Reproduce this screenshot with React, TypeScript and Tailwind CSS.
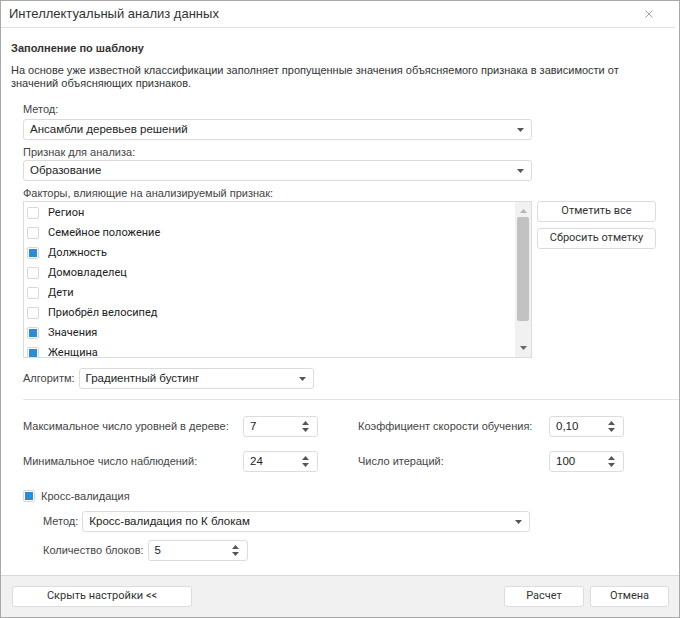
import React from 'react';

const FIELDS = [
  { name: 'Регион', on: false },
  { name: 'Семейное положение', on: false },
  { name: 'Должность', on: true },
  { name: 'Домовладелец', on: false },
  { name: 'Дети', on: false },
  { name: 'Приобрёл велосипед', on: false },
  { name: 'Значения', on: true },
  { name: 'Женщина', on: true },
];

const Caret: React.FC = () => (
  <svg width="7" height="4" viewBox="0 0 7 4" className="shrink-0">
    <path d="M0 0h7L3.5 4z" fill="#555" />
  </svg>
);

const Select: React.FC<{ value: string; className?: string }> = ({ value, className = '' }) => (
  <div className={`h-[21px] flex items-center justify-between pl-[6px] pr-[7px] border border-[#dcdcdc] rounded-[3px] bg-white text-[11.5px] text-[#222] ${className}`}>
    <span className="truncate">{value}</span>
    <Caret />
  </div>
);

const Spin: React.FC<{ value: string; className?: string }> = ({ value, className = '' }) => (
  <div className={`h-[21px] flex items-center justify-between pl-[6px] pr-[8px] border border-[#dcdcdc] rounded-[3px] bg-white text-[11.5px] text-[#222] ${className}`}>
    <span>{value}</span>
    <svg width="7" height="11" viewBox="0 0 7 11" className="shrink-0">
      <path d="M0 4h7L3.5 0z" fill="#555" />
      <path d="M0 7h7L3.5 11z" fill="#555" />
    </svg>
  </div>
);

const Check: React.FC<{ on: boolean }> = ({ on }) => (
  <span className="w-[12px] h-[12px] shrink-0 flex items-center justify-center border border-[#d8d8d8] rounded-[2px] bg-white">
    {on && <span className="w-[8px] h-[8px] bg-[#2b8dd6]" />}
  </span>
);

const Button: React.FC<{ label: string; className?: string }> = ({ label, className = '' }) => (
  <button className={`h-[21px] flex items-center justify-center border border-[#dcdcdc] rounded-[3px] bg-white text-[11px] text-[#333] font-['Roboto',sans-serif] ${className}`}>
    {label}
  </button>
);

export default function App() {
  return (
    <div className="w-[680px] h-[618px] flex flex-col border border-[#a9a9a9] bg-white text-[#333] font-['Liberation_Sans',Arial,sans-serif]">
      <div className="h-[27px] shrink-0 flex items-center justify-between pl-[8px] pr-[22px] border-b border-[#dedede] mr-[4px]">
        <span className="text-[13px] text-[#333]">Интеллектуальный анализ данных</span>
        <svg width="8" height="8" viewBox="0 0 8 8">
          <path d="M0.5 0.5l7 7M7.5 0.5l-7 7" stroke="#a0a0a0" strokeWidth="1" />
        </svg>
      </div>

      <div className="flex-1 pt-[13px] pl-[10px]">
        <div className="text-[11px] leading-[14px] font-bold text-[#333]">Заполнение по шаблону</div>
        <div className="mt-[9px] text-[11px] leading-[13px] text-[#333] pr-[40px]">
          На основе уже известной классификации заполняет пропущенные значения объясняемого признака в зависимости от значений объясняющих признаков.
        </div>

        <div className="pl-[12px] text-[11px] text-[#444]">
          <div className="mt-[12px] leading-[14px]">Метод:</div>
          <Select value="Ансамбли деревьев решений" className="mt-[3px] w-[509px]" />
          <div className="mt-[5px] leading-[14px]">Признак для анализа:</div>
          <Select value="Образование" className="mt-[1px] w-[509px]" />
          <div className="mt-[5px] leading-[14px]">Факторы, влияющие на анализируемый признак:</div>

          <div className="mt-[1px] flex gap-[5px]">
            <div className="w-[509px] h-[157px] flex border border-[#dcdcdc] bg-white overflow-hidden">
              <div className="flex-1 pl-[3px] pt-[1px] font-['Roboto',sans-serif] text-[11px] text-[#222]">
                {FIELDS.map(f => (
                  <div key={f.name} className="h-[20px] flex items-center gap-[9px]">
                    <Check on={f.on} />
                    <span>{f.name}</span>
                  </div>
                ))}
              </div>
              <div className="w-[16px] shrink-0 flex flex-col items-center bg-[#f1f1f1]">
                <svg width="7" height="4" viewBox="0 0 7 4" className="mt-[7px]">
                  <path d="M0 4h7L3.5 0z" fill="#b5b5b5" />
                </svg>
                <div className="mt-[4px] w-[12px] h-[104px] rounded-[2px] bg-[#c2c2c2]" />
                <div className="flex-1" />
                <svg width="7" height="4" viewBox="0 0 7 4" className="mb-[7px]">
                  <path d="M0 0h7L3.5 4z" fill="#666" />
                </svg>
              </div>
            </div>
            <div className="flex flex-col gap-[6px]">
              <Button label="Отметить все" className="w-[119px]" />
              <Button label="Сбросить отметку" className="w-[119px]" />
            </div>
          </div>

          <div className="mt-[10px] flex items-center gap-[4px]">
            <span>Алгоритм:</span>
            <Select value="Градиентный бустинг" className="w-[235px]" />
          </div>
        </div>

        <div className="mt-[10px] ml-[12px] border-t border-[#e4e4e4]" />

        <div className="pl-[12px] text-[11px] text-[#444]">
          <div className="mt-[16px] flex items-center">
            <span className="w-[220px]">Максимальное число уровней в дереве:</span>
            <Spin value="7" className="w-[75px]" />
            <span className="ml-[40px] w-[191px]">Коэффициент скорости обучения:</span>
            <Spin value="0,10" className="w-[75px]" />
          </div>
          <div className="mt-[14px] flex items-center">
            <span className="w-[220px]">Минимальное число наблюдений:</span>
            <Spin value="24" className="w-[75px]" />
            <span className="ml-[40px] w-[191px]">Число итераций:</span>
            <Spin value="100" className="w-[75px]" />
          </div>

          <div className="mt-[18px] h-[12px] flex items-center gap-[6px]">
            <Check on />
            <span>Кросс-валидация</span>
          </div>

          <div className="pl-[20px]">
            <div className="mt-[9px] flex items-center gap-[4px]">
              <span>Метод:</span>
              <Select value="Кросс-валидация по К блокам" className="w-[448px]" />
            </div>
            <div className="mt-[8px] flex items-center gap-[4px]">
              <span>Количество блоков:</span>
              <Spin value="5" className="w-[100px]" />
            </div>
          </div>
        </div>
      </div>

      <div className="h-[42px] shrink-0 flex items-center justify-between pl-[11px] pr-[10px] border-t border-[#d8d8d8] bg-[#f1f1f1]">
        <Button label="Скрыть настройки <<" className="w-[180px]" />
        <div className="flex gap-[6px]">
          <Button label="Расчет" className="w-[80px]" />
          <Button label="Отмена" className="w-[79px]" />
        </div>
      </div>
    </div>
  );
}
